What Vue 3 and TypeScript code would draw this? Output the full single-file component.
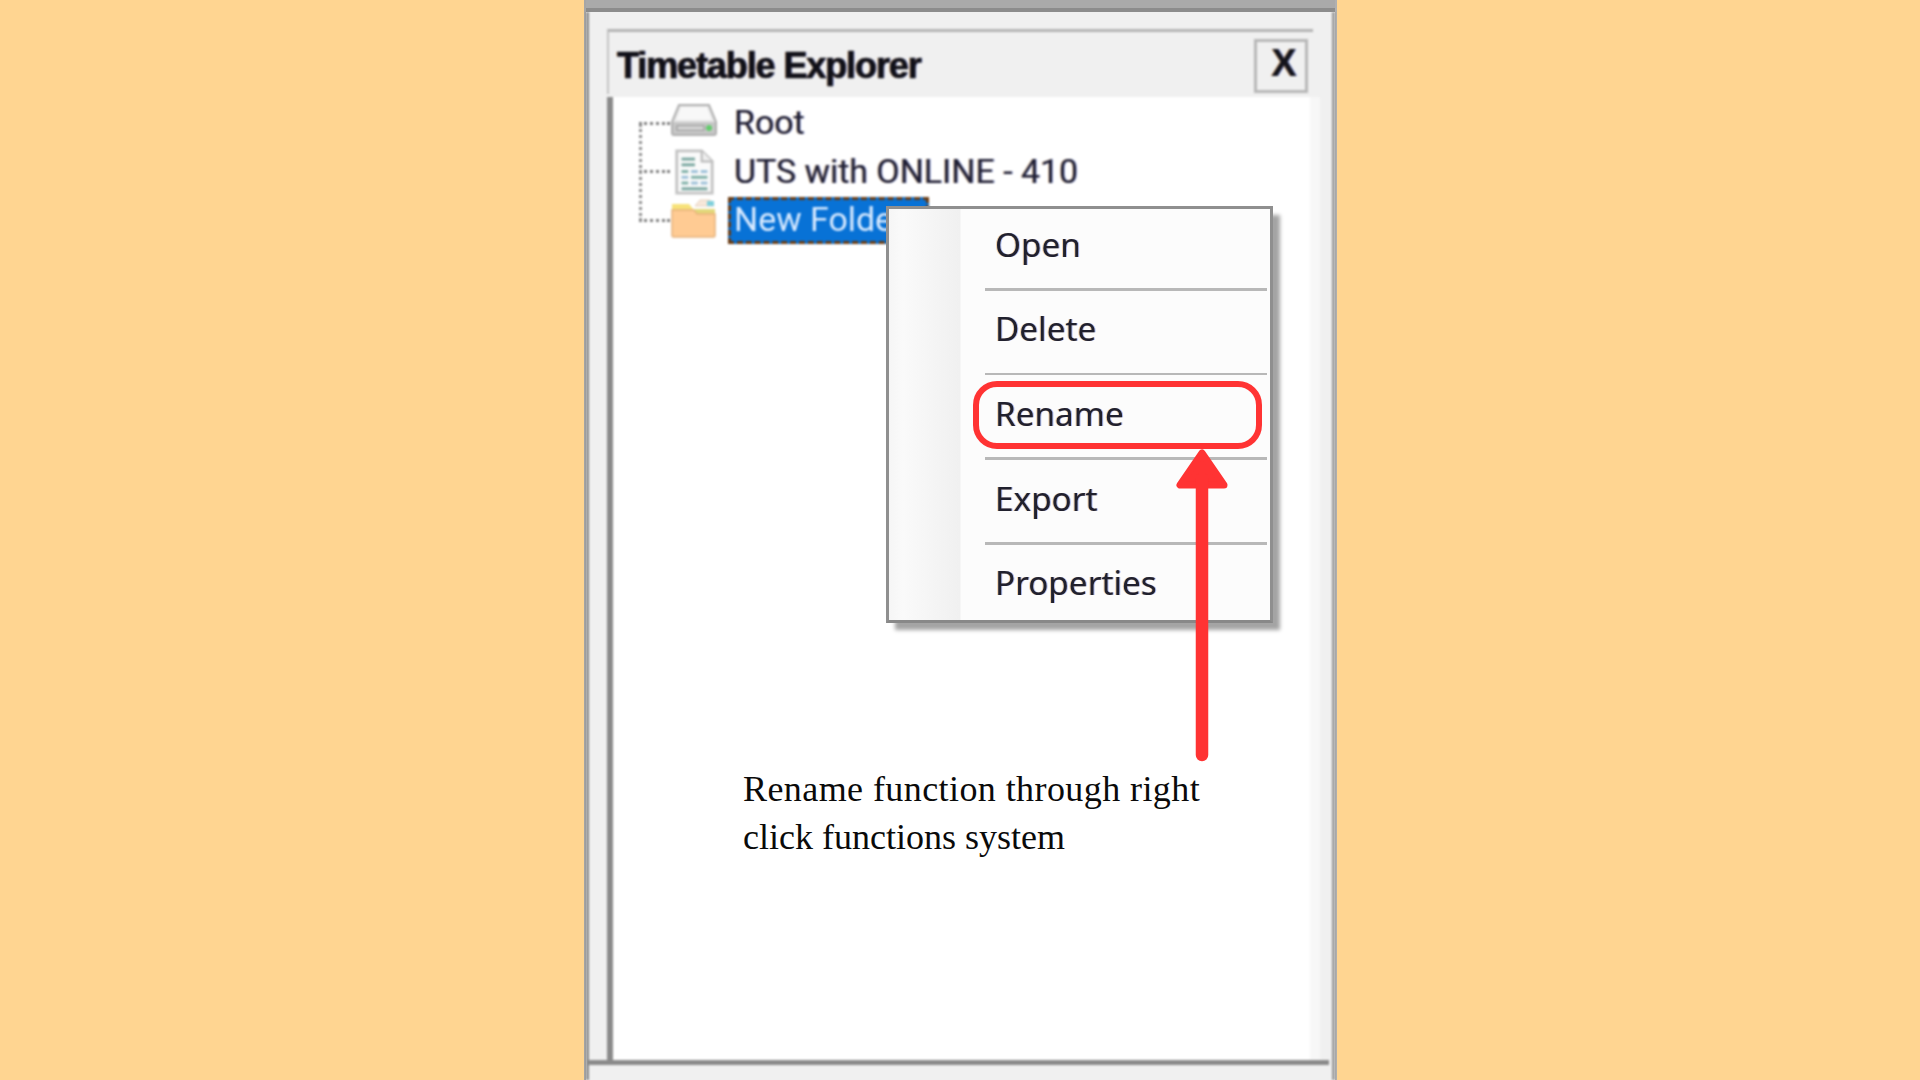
<script setup lang="ts">
interface MenuEntry { label: string }
const menuEntries: MenuEntry[] = [
  { label: 'Open' },
  { label: 'Delete' },
  { label: 'Rename' },
  { label: 'Export' },
  { label: 'Properties' },
]
</script>

<template>
  <div class="page">
    <div class="window">
      <div class="top-band"></div>
      <div class="window-body">
        <div class="panel">
          <div class="panel-head">
            <span class="panel-title">Timetable Explorer</span>
            <button class="close-btn" type="button">X</button>
          </div>
          <div class="panel-content">
            <div class="tree">
              <div class="tree-lines"></div>
              <div class="tree-row">
                <span class="tick"></span>
                <svg class="node-icon icon-drive" viewBox="0 0 48 34">
                  <path d="M9 2h30l7 17v11a2 2 0 0 1-2 2H4a2 2 0 0 1-2-2V19z" fill="#e6e6e6" stroke="#b0b0b0" stroke-width="2" />
                  <path d="M11 4h26l5 13H6z" fill="#f8f8f8" />
                  <rect x="3" y="19" width="42" height="12" fill="#c6c6c6" />
                  <rect x="7" y="23" width="27" height="4" fill="#dedede" stroke="#8e8e8e" stroke-width="1" />
                  <circle cx="39" cy="25" r="3" fill="#62cc6c" />
                </svg>
                <span class="node-label">Root</span>
              </div>
              <div class="tree-row">
                <span class="tick"></span>
                <svg class="node-icon icon-doc" viewBox="0 0 48 48">
                  <path d="M6 2h26l11 11v33H6z" fill="#fafafa" stroke="#c4c4c4" stroke-width="3" />
                  <path d="M32 2v11h11" fill="#eeeeee" stroke="#b8b8b8" stroke-width="2" />
                  <rect x="11" y="9" width="14" height="3" fill="#7aa7a0" />
                  <rect x="11" y="15" width="14" height="3" fill="#7aa7a0" />
                  <rect x="11" y="22" width="7" height="3" fill="#7fb0a8" />
                  <rect x="21" y="22" width="7" height="3" fill="#9cc0d8" />
                  <rect x="31" y="22" width="7" height="3" fill="#9cc0d8" />
                  <rect x="11" y="28" width="7" height="3" fill="#9cc0d8" />
                  <rect x="21" y="28" width="17" height="3" fill="#7fb0a8" />
                  <rect x="11" y="34" width="7" height="3" fill="#7fb0a8" />
                  <rect x="21" y="34" width="7" height="3" fill="#9cc0d8" />
                  <rect x="31" y="34" width="7" height="3" fill="#9cc0d8" />
                  <rect x="11" y="40" width="27" height="3" fill="#7aa7a0" />
                </svg>
                <span class="node-label">UTS with ONLINE - 410</span>
              </div>
              <div class="tree-row">
                <span class="tick"></span>
                <svg class="node-icon icon-folder" viewBox="0 0 48 40">
                  <path d="M25 8l5-6h10l4 6z" fill="#f8e8da" stroke="#e6d0bc" stroke-width="1" />
                  <rect x="37" y="3" width="7" height="5" fill="#7fd0dc" />
                  <path d="M2 6h17l5 6h21v6H2z" fill="#f7e27a" />
                  <path d="M2 12h22l3 4h18v21.500a1.500 1.500 0 0 1-1.500 1.500H3.500A1.500 1.500 0 0 1 2 37.500z" fill="#ffcb93" stroke="#e6b27c" stroke-width="1.500" />
                  <path d="M24 11h21v4H27z" fill="#e2d87a" />
                </svg>
                <span class="node-label selected">New Folder</span>
              </div>
            </div>
          </div>
        </div>
        <div class="footer-rule"></div>
      </div>

      <div class="context-menu">
        <template v-for="(entry, i) in menuEntries" :key="entry.label">
          <div class="menu-row">
            <span class="menu-label">{{ entry.label }}</span>
          </div>
          <div v-if="i < menuEntries.length - 1" class="menu-sep"></div>
        </template>
      </div>

      <div class="highlight-ring"></div>
      <svg class="arrow" viewBox="0 0 52 314">
        <path d="M26 4 L4 36 H48 Z" fill="#ff3333" stroke="#ff3333" stroke-linejoin="round" stroke-width="7" />
        <path d="M26 30 V306" fill="none" stroke="#ff3333" stroke-linecap="round" stroke-width="12.500" />
      </svg>
      <p class="caption"><span class="caption-first">Rename function through right</span><br />click functions system</p>
    </div>
  </div>
</template>

<style>
html, body { margin: 0; background: #ffd591; }
</style>

<style scoped>
.page {
  width: 1920px;
  height: 1080px;
  box-sizing: border-box;
  padding-left: 1px;
  background: #ffd591;
  display: flex;
  justify-content: center;
  overflow: hidden;
}
.window {
  position: relative;
  width: 753px;
  height: 1080px;
  display: flex;
  flex-direction: column;
  background: #f0f0f0;
  box-sizing: border-box;
  border-left: 2px solid #a6a6a6;
  border-right: 2px solid #b0b0b0;
}
.top-band {
  height: 8px;
  background: #aaaaaa;
  border-bottom: 4px solid #8c8c8c;
  flex: none;
  filter: blur(0.6px);
}
.window-body {
  flex: 1;
  display: flex;
  flex-direction: column;
  border-left: 3px solid #8c8c8c;
  border-right: 3px solid #9a9a9a;
  filter: blur(0.9px);
  min-height: 0;
}
.panel {
  flex: 1;
  margin: 17px 12px 0 18px;
  display: flex;
  flex-direction: column;
  min-height: 0;
}
.panel-head {
  height: 65px;
  flex: none;
  box-sizing: border-box;
  margin-right: 7px;
  border-top: 3px solid #b4b4b4;
  border-left: 2px solid #c4c4c4;
  display: flex;
  align-items: center;
  justify-content: space-between;
  padding-right: 5px;
}
.panel-title {
  font-family: "Liberation Sans", Arial, sans-serif;
  font-weight: 700;
  font-size: 36px;
  letter-spacing: -1.1px;
  -webkit-text-stroke: 0.5px #101018;
  color: #101018;
  margin-left: 8px;
  margin-top: 6px;
  text-shadow: -1px 0 rgba(220, 130, 30, 0.55), 1px 0 rgba(40, 80, 220, 0.55);
}
.close-btn {
  width: 54px;
  height: 54px;
  box-sizing: border-box;
  border: 3px solid #b8b8b8;
  background: #f0f0f0;
  font-family: "Liberation Sans", Arial, sans-serif;
  font-weight: 700;
  font-size: 38px;
  line-height: 1;
  color: #14141c;
  padding: 0 0 6px 6px;
  margin-top: 5px;
  text-shadow: -1px 0 rgba(220, 130, 30, 0.55), 1px 0 rgba(40, 80, 220, 0.55);
}
.panel-content {
  flex: 1;
  background: #ffffff;
  border-left: 6px solid #8a8a8a;
  border-right: 10px solid #f7f7f7;
  margin-top: 3px;
  min-height: 0;
}
.tree {
  position: relative;
  padding: 2px 0 0 26px;
}
.tree-lines {
  position: absolute;
  left: 26px;
  top: 27px;
  width: 0;
  height: 97px;
  border-left: 3px dotted #8e8e8e;
}
.tree-row {
  height: 48.500px;
  display: flex;
  align-items: center;
}
.tick {
  width: 31px;
  flex: none;
  border-top: 3px dotted #7e7e7e;
}
.node-icon {
  width: 48px;
  flex: none;
}
.icon-drive {
  height: 34px;
  margin-top: -6px;
}
.icon-doc {
  height: 46px;
}
.icon-folder {
  height: 40px;
  margin-top: -5px;
}
.node-label {
  font-family: Roboto, "Liberation Sans", sans-serif;
  font-size: 33.900px;
  color: #1e1e34;
  margin-left: 16px;
  margin-top: -1px;
  white-space: nowrap;
  text-shadow: -1px 0 rgba(220, 140, 40, 0.4), 1px 0 rgba(50, 90, 220, 0.4);
}
.node-label.selected {
  margin-left: 10px;
  margin-top: 0;
  width: 201px;
  height: 47px;
  box-sizing: border-box;
  padding-left: 3px;
  line-height: 40px;
  background: #0872d6;
  color: #d8eaff;
  border: 3px dashed #6a3c14;
  overflow: hidden;
  text-shadow: none;
}
.footer-rule {
  flex: none;
  height: 5px;
  background: #8a8a8a;
  margin-right: 3px;
  margin-left: -2px;
  margin-bottom: 15px;
}
.context-menu {
  position: absolute;
  left: 300px;
  top: 206px;
  width: 387px;
  height: 417px;
  box-sizing: border-box;
  border: 3px solid #8f8f8f;
  border-bottom-color: #888888;
  background: linear-gradient(to right, #f6f6f6 0, #fafafa 14px, #f0f0f0 71px, #fcfcfc 72px);
  box-shadow: 8px 8px 4px -1px #a4a4a4;
  filter: blur(0.7px);
}
.menu-row {
  height: 82px;
  box-sizing: border-box;
  padding: 0 0 7px 106px;
  display: flex;
  align-items: center;
}
.menu-row:first-child {
  height: 79px;
  padding-bottom: 9px;
}
.menu-label {
  font-family: "Noto Sans", "Open Sans", sans-serif;
  font-size: 33.300px;
  color: #20202e;
  text-shadow: -1px 0 rgba(220, 140, 40, 0.4), 1px 0 rgba(50, 90, 220, 0.4);
}
.menu-sep {
  height: 2.700px;
  margin-left: 96px;
  margin-right: 3px;
  background: #b8b8b8;
}
.highlight-ring {
  position: absolute;
  left: 387px;
  top: 381px;
  width: 289px;
  height: 68px;
  box-sizing: border-box;
  border: 6px solid #ff3333;
  border-radius: 24px;
}
.arrow {
  position: absolute;
  left: 590px;
  top: 449px;
  width: 52px;
  height: 314px;
  overflow: visible;
}
.caption {
  position: absolute;
  left: 157px;
  top: 766px;
  margin: 0;
  font-family: "Liberation Serif", "Times New Roman", serif;
  font-size: 36px;
  line-height: 47.500px;
  color: #0a0a0a;
  white-space: nowrap;
}
.caption-first {
  letter-spacing: 0.42px;
}
</style>
